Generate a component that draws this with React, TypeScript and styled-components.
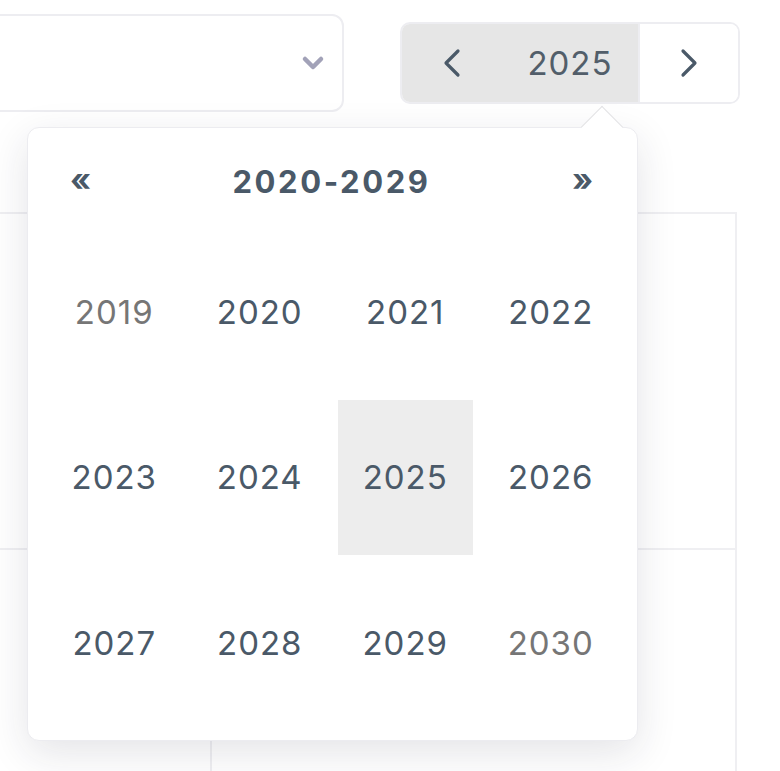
import { ChevronDown } from 'lucide-react';
import styled, { createGlobalStyle } from 'styled-components';

const GlobalStyle = createGlobalStyle`
  html, body {
    margin: 0;
    padding: 0;
    background: #ffffff;
    overflow: hidden;
  }
  body {
    font-family: Inter, "Liberation Sans", Arial, sans-serif;
    color: #4a5967;
  }
`;

const TEXT = '#4a5968';
const MUTED = '#767676';

const Page = styled.div`
  position: relative;
  width: 780px;
  height: 771px;
  overflow: hidden;
`;

const Toolbar = styled.div`
  display: flex;
  align-items: flex-start;
  gap: 56px;
  padding-top: 14px;
  height: 212px;
  box-sizing: border-box;
`;

const Select = styled.div`
  width: 400px;
  height: 98px;
  margin-left: -56px;
  box-sizing: border-box;
  border: 2px solid #ededf1;
  border-radius: 12px;
  display: flex;
  align-items: center;
  justify-content: flex-end;
  padding-right: 13px;
  color: #a2a2b8;
`;

const YearNav = styled.div`
  margin-top: 8px;
  display: flex;
  width: 340px;
  height: 82px;
  box-sizing: border-box;
  border: 2px solid #ededf1;
  border-radius: 10px;
  overflow: hidden;
`;

const NavButton = styled.button<{ $pressed?: boolean }>`
  width: 100px;
  border: none;
  padding: 0;
  margin: 0;
  display: flex;
  align-items: center;
  justify-content: center;
  background: ${(p) => (p.$pressed ? '#e6e6e6' : '#ffffff')};
  color: ${TEXT};
  ${(p) => (!p.$pressed ? 'border-left: 2px solid #ededf1;' : '')}
`;

const YearLabel = styled.div`
  flex: 1;
  background: #e6e6e6;
  display: flex;
  align-items: center;
  justify-content: center;
  font-size: 33px;
  letter-spacing: 1px;
  color: #525e6a;
`;

const Table = styled.div`
  display: grid;
  grid-template-columns: 212px 525px;
  grid-auto-rows: 336px;
  border-top: 2px solid #efeff2;
  width: 737px;
`;

const Cell = styled.div`
  border-right: 2px solid #efeff2;
  border-bottom: 2px solid #efeff2;
`;

const Popover = styled.div`
  position: absolute;
  left: 27px;
  top: 127px;
  width: 611px;
  height: 614px;
  box-sizing: border-box;
  background: #ffffff;
  border: 1px solid #ececf0;
  border-radius: 12px;
  box-shadow: 0 12px 40px rgba(30, 30, 60, 0.12);
  padding: 0 19px 20px;
  display: flex;
  flex-direction: column;
`;

const Arrow = styled.div`
  position: absolute;
  left: 559px;
  top: -16px;
  width: 29px;
  height: 29px;
  background: #ffffff;
  border-top: 1px solid #e2e2e4;
  border-left: 1px solid #e2e2e4;
  transform: rotate(45deg);
`;

const Header = styled.div`
  height: 107px;
  display: flex;
  align-items: center;
  justify-content: space-between;
  padding: 0 25px 0 23px;
`;

const HeaderArrow = styled.span`
  font-size: 32px;
  font-weight: 700;
  color: ${TEXT};
  line-height: 1;
  padding-bottom: 4px;
`;

const HeaderTitle = styled.span`
  font-size: 31px;
  font-weight: 700;
  letter-spacing: 2.6px;
  color: ${TEXT};
`;

const YearGrid = styled.div`
  flex: 1;
  display: grid;
  grid-template-columns: repeat(4, 1fr);
  grid-template-rows: repeat(3, 1fr);
  column-gap: 11px;
  row-gap: 11px;
`;

const YearCell = styled.div<{ $muted?: boolean; $active?: boolean }>`
  display: flex;
  align-items: center;
  justify-content: center;
  font-size: 33px;
  letter-spacing: 1px;
  color: ${(p) => (p.$muted ? MUTED : TEXT)};
  background: ${(p) => (p.$active ? '#ededed' : 'transparent')};
`;

const Chevron = ({ dir }: { dir: 'left' | 'right' }) => (
  <svg width="20" height="30" viewBox="0 0 20 30" fill="none">
    <polyline
      points={dir === 'left' ? '16,3 4,15 16,27' : '4,3 16,15 4,27'}
      stroke="currentColor"
      strokeWidth="3.2"
      strokeLinecap="round"
      strokeLinejoin="round"
    />
  </svg>
);

const years = [2019, 2020, 2021, 2022, 2023, 2024, 2025, 2026, 2027, 2028, 2029, 2030];

export default function App() {
  return (
    <Page>
      <GlobalStyle />
      <Toolbar>
        <Select>
          <ChevronDown size={32} strokeWidth={3.4} />
        </Select>
        <YearNav>
          <NavButton $pressed>
            <Chevron dir="left" />
          </NavButton>
          <YearLabel>2025</YearLabel>
          <NavButton>
            <Chevron dir="right" />
          </NavButton>
        </YearNav>
      </Toolbar>
      <Table>
        <Cell />
        <Cell />
        <Cell />
        <Cell />
      </Table>
      <Popover>
        <Arrow />
        <Header>
          <HeaderArrow>«</HeaderArrow>
          <HeaderTitle>2020-2029</HeaderTitle>
          <HeaderArrow>»</HeaderArrow>
        </Header>
        <YearGrid>
          {years.map((y) => (
            <YearCell key={y} $muted={y < 2020 || y > 2029} $active={y === 2025}>
              {y}
            </YearCell>
          ))}
        </YearGrid>
      </Popover>
    </Page>
  );
}
